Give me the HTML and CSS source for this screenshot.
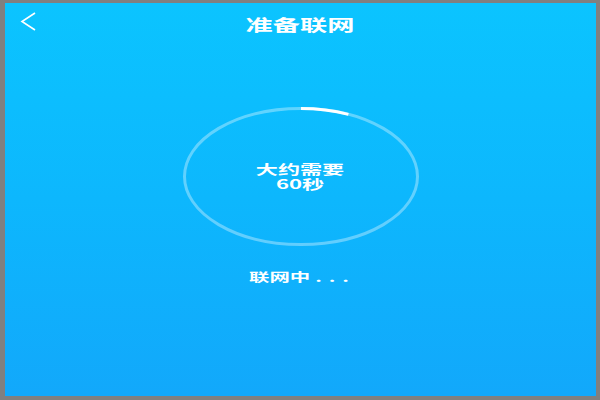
FILE: index.html
```html
<!DOCTYPE html>
<html lang="zh">
<head>
<meta charset="utf-8">
<link rel="stylesheet" href="styles.css">
</head>
<body>
<div class="screen">
  <div class="header">
    <div class="back">
      <svg width="18" height="22" viewBox="0 0 18 22"><path d="M15 2 L2 10.5 L15 19" fill="none" stroke="#fff" stroke-width="1.6"/></svg>
    </div>
    <div class="title"><span class="stretch">准备联网</span></div>
    <div></div>
  </div>
  <div class="ring">
    <svg class="ring-svg" width="236" height="139" viewBox="0 0 236 139">
      <ellipse cx="118" cy="69.5" rx="116.5" ry="68" fill="none" stroke="rgba(255,255,255,0.35)" stroke-width="3"/>
      <path d="M118 1.5 A116.5 68 0 0 1 165.4 7.4" fill="none" stroke="#fff" stroke-width="3"/>
    </svg>
    <p class="ring-text stretch">大约需要<br>60秒</p>
  </div>
  <div class="status"><span class="stretch">联网中<span class="dots">...</span></span></div>
</div>
</body>
</html>
```

FILE: styles.css
```css
html, body {
  margin: 0;
  padding: 0;
}
body {
  background: #808080;
  width: 600px;
  height: 400px;
  overflow: hidden;
}
.screen {
  margin: 3px 4px 4px 5px;
  width: 591px;
  height: 393px;
  background: linear-gradient(180deg, #0bc4ff 0%, #0db7fd 50%, #12a8fb 100%);
  display: flex;
  flex-direction: column;
  align-items: center;
  font-family: "Noto Sans CJK SC", "Noto Sans", sans-serif;
  color: #fff;
}
.header {
  width: 100%;
  height: 40px;
  display: grid;
  grid-template-columns: 1fr auto 1fr;
  align-items: center;
}
.back {
  padding-left: 15px;
  padding-bottom: 2px;
  display: flex;
}
.title {
  font-size: 16px;
  font-weight: bold;
  line-height: 20px;
  padding-top: 1px;
}
.stretch {
  display: inline-block;
  transform: scaleX(1.7);
}
.ring {
  margin-top: 64px;
  width: 236px;
  height: 139px;
  position: relative;
  display: flex;
  align-items: center;
  justify-content: center;
}
.ring-svg {
  position: absolute;
  left: 0;
  top: 0;
}
.ring-text {
  margin: 0;
  text-align: center;
  font-size: 13px;
  font-weight: bold;
  line-height: 14.5px;
}
.status {
  margin-top: 24px;
  font-size: 12px;
  font-weight: bold;
  line-height: 14px;
  padding-left: 4px;
}
.dots {
  letter-spacing: 4px;
  margin-left: 3px;
}
```
